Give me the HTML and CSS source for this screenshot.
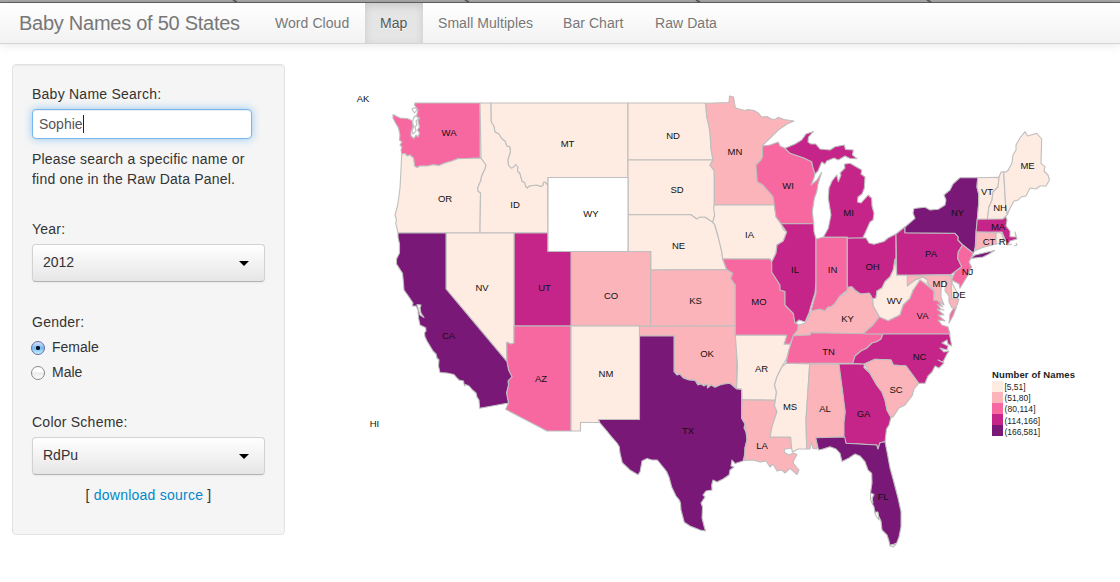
FILE: index.html
```html
<!DOCTYPE html>
<html lang="en">
<head>
<meta charset="utf-8">
<title>Baby Names of 50 States</title>
<link rel="stylesheet" href="styles.css">
</head>
<body>
<div class="chrome-edge">
  <svg width="1120" height="3" viewBox="0 0 1120 3"><path class="tab-notch" d="M233 0L237 2M465 0L469 2M696 0L700 2M927 0L931 2"/></svg>
</div>
<header class="navbar">
  <a class="brand">Baby Names of 50 States</a>
  <nav class="tabs">
    <a class="tab tab-cloud">Word Cloud</a>
    <a class="tab tab-map active">Map</a>
    <a class="tab tab-multiples">Small Multiples</a>
    <a class="tab tab-bar">Bar Chart</a>
    <a class="tab tab-raw">Raw Data</a>
  </nav>
</header>
<main class="layout">
  <form class="well">
    <label class="label">Baby Name Search:</label>
    <div class="search"><span>Sophie</span><i class="caret"></i></div>
    <p class="help">Please search a specific name or<br>find one in the Raw Data Panel.</p>
    <label class="label year">Year:</label>
    <div class="select"><span>2012</span><i class="arrow"></i></div>
    <label class="label gender">Gender:</label>
    <div class="radio"><i class="dot checked"></i><span>Female</span></div>
    <div class="radio"><i class="dot"></i><span>Male</span></div>
    <label class="label scheme">Color Scheme:</label>
    <div class="select"><span>RdPu</span><i class="arrow"></i></div>
    <p class="source">[ <a>download source</a> ]</p>
  </form>
  <svg class="map" width="760" height="518" viewBox="340 44 760 518">
    <g class="states">
      <path class="c3" d="M415 103L480 103L480 157L481 158L457.700 158.700L452 161L445 163L439 165.500L433.500 164.700L427 166L420 166L417 167.500L414.500 166L413.500 158L410 155L407 156L405 153.500L401.700 154L401 150L402 147L400 145L402 142L399.500 140L400 135L398.500 128L395 122L393 118L393 114.500L400 118L407 118.500L412 120.500L413 126.500L411 132L411 136L414 138.500L416 135L418 137L419.500 133L417.500 130L419.500 127L418 121L419.500 118L416.500 116L418 110L414.500 105Z"/>
      <path class="water" d="M412 109L415 107.500L417 110L414.500 113ZM413.500 118L416 115.500L418.500 119L416 121L417 125L415 127L416 131L413 134L412 131L414 126L412.500 123Z"/>
      <path class="c1" d="M401.700 154L405 153.500L407 156L410 155L413.500 158L414.500 166L417 167.500L420 166L427 166L433.500 164.700L439 165.500L445 163L452 161L457.700 158.700L481 158L486 165L485 169L481.500 176.500L481 180L477.700 188L478 191L480.500 193L480 233L398 233L395.700 223L396.500 220L395 215L397.700 205L400 188L401 170Z"/>
      <path class="c1" d="M480 103L491 103L491.300 121.700L494 126L495 131.700L499 134L501.700 138.500L505 141L507 146L510 146.700L510.500 152L508 160L508.500 165L511 168L513 167.500L515.700 164.500L518 167L517.500 171L520 173.500L522 181L525 183L525.500 186L527.500 188L529 186L536.700 185L541 186.500L543 185L543.500 182L545 182L547.700 185L548 233L480 233L480.500 193L478 191L477.700 188L481 180L481.500 176.500L485 169L486 165L481 158Z"/>
      <path class="c1" d="M491 103L628 103V177.500H548V185L545 182L543.500 182L543 185L541 186.500L536.700 185L529 186L527.500 188L525.500 186L525 183L522 181L520 173.500L517.500 171L518 167L515.700 164.500L513 167.500L511 168L508.500 165L508 160L510.500 152L510 146.700L507 146L505 141L501.700 138.500L499 134L495 131.700L494 126L491.300 121.700Z"/>
      <path class="c1" d="M628 103H705.700L706.700 116.700L709 124L710 131.700L711 148.300L713 160H628Z"/>
      <path class="c1" d="M628 160H713L710 165L714.300 171V205L714.700 215L712.700 222.300L705 217.300L696.700 219L691 214.700H628Z"/>
      <path class="c1" d="M628 214.700H691L696.700 219L700 217L705 217.300L712.700 222.300L714.700 224.300L717.700 235L720 243L721.700 251.700L722.700 259L726.700 269.500L650.700 270V251.500H628Z"/>
      <path class="c2" d="M571 251.500H650.700V326H571Z"/>
      <path class="c4" d="M514 233H548V251.500H571V326H514Z"/>
      <path class="c1" d="M446 233H514V343L511 344L506.700 342.300L507 361.700L446 289Z"/>
      <path class="c3" d="M514 326H571V431H547L505.700 409.300L508.500 403L506.500 393L508.500 385L508 381L512 376.700L508.500 370L507 361.700L506.700 342.300L511 344L514 343Z"/>
      <path class="c5" d="M398 233H446V289L507 361.700L508.500 370L512 376.700L508 381L508.500 385L506.500 393L508.500 403L479.700 408.300L479 400L477 397L476 393L472.500 390L469 386L465.500 384.500L464.500 386L463.500 381L459 380L457 378L454 374.500L447 373L440 372.500L438.500 366L439 360L437 358L436 354L433 351L427 341L425 336.700L424.500 333L426 331L425.700 327.700L420 325L418.500 318L418 310L416 306L412.300 306L413 303L409 297L404 290L403.500 283L402.500 273.300L396.500 264L396.500 259L399.500 253L399.500 244L398 237Z"/>
      <path class="water" d="M417 304.500L421 305L420 308L421 313L424 317.500L420 315Z"/>
      <path class="c1" d="M571 326H639.500V419.500H598.500L600 422.500H580.500V431H571Z"/>
      <path class="c2" d="M650.700 270L726.700 269.500L732.700 273.300L730.700 278.300L735.300 285V325.700L650.700 326.300Z"/>
      <path class="c2" d="M639.500 326.300L735.300 325.700V335L736.700 350V388.300L730 383.300L720 385L715 387.300L711 385L707 387L704 384L700 385L695 380L689 380L683.300 377.300L680 374.300L674 371.700V336H639.500Z"/>
      <path class="c5" d="M639.500 336H674V371.700L677 375L680 374.300L683.300 378L689 380L695 380.500L698 385L701 384L704 386L707 384L707.500 388L711 385L715 387.300L720 385L724 384L730 383.300L736.700 389L741.700 389.300V418.300L745 424L744 428L746.700 433.300L747 440L745 448L745.500 453L743 461L735 463.500L732 460L731 466L734 467L730 470L729 475L723 479L717 482L713 480L711.700 485L712 490L706 491L703 495L705 497L701 503L702.500 507L702 518L704 526L705.500 531L700 530L695 528L690 526L684.300 522.300L681 510L680.500 503L679.300 500L676 496L671.700 487L669 477L666.700 471.700L663 467L657.300 460L652 460L647 458.500L642 461L640 472L638 474.700L630 470L622.300 462.700L620 453L619.300 446.700L617 443L611.700 437L606 430L600 423L598.500 419.500H639.500Z"/>
      <path class="c2" d="M705.700 103.300L729 102.500L729.500 96L733.500 97L735.300 107.700L739 109L745 110.500L748 109.500L754 110.500L759 113.500L761.500 117L767 116.500L771.700 119.300L776 119L778.300 117.300L784 119.500L794 121L787 124L778.300 130L762.500 145.500V156.700L761 160L756 165L757.300 181.700L763 185L773 196.700L774.300 205H714.300V171L710 165L713 160L711 148.300L710 131.700L706.700 116.700Z"/>
      <path class="c1" d="M714.300 205H774.300L776 217L781 223.300L783 229L786.700 232L783.300 241L777 245L776 253.300L771.700 262L770 259H722.700L721.700 251.700L717.700 235L714.700 224.300L712.700 222.300L714.700 215L713.500 208Z"/>
      <path class="c3" d="M722.700 259H770L771.700 262V272L780 285V290L785 291.500L785 305L793.300 313.300L795 321.700L798.300 325L797.700 330L793.300 335.700L790 344.300H784L786.700 335.300H735.300V285L730.700 278.300L732.700 273.300L726.700 269.500Z"/>
      <path class="c1" d="M735.300 335.300H786.700L784 344.300H791L789 350L786.700 358.300L782 366.700L777 376.700L774.500 385L776.500 392L775 400.300L742 399.700L741.700 389.300L736.700 388.300L737.500 365Z"/>
      <path class="c2" d="M742 399.700L775 400.300L774.500 406L777 411.700L772 426.700L770 437H790.700L791.700 448.300L785 449L784 452L789 455L793 453L797 454.500L794 460L793 463L799 470L797 474.500L790 468.300L785 473L782 470L777 471L773 464L770 467L766 461L760 462L753 460L744 460.500L745 448L747 440L745 424L741.700 418.300Z"/>
      <path class="c1" d="M786 363.300L809.700 364L806 420L806.700 449L798.300 449L792.500 452L791.500 448L790.700 437H770L772 426.700L777 411.700L774.500 406L776.500 392L774.500 385L777 376.700L782 366.700Z"/>
      <path class="c2" d="M809.700 364H839L844.500 405L845.300 412L844 423L844.700 437L815.700 437.700L817.300 444L816.700 449L813 448.500L811 441.700L810 449H806.700L806 420Z"/>
      <path class="c4" d="M839 364H864.300L864 367.500L870 373.300L876.700 385L882 392L885 400L887 410L891 417.500L889 425L886.500 429L885 441.700L880 442.700L878 449L876.700 445L846 443.300L844 437V423L845.300 412L843 394Z"/>
      <path class="c5" d="M815.700 437.700L844.700 437L846 443.300L876.700 445L878 449L880 442.700L885 441.700L887.300 453.300L890 468L893.300 480L898 498L901 511.700V526.700L899 537L896.700 543L890 546L889 541L887 535L882 530L881 521L878 515L875 513L874 507L871.500 502L873 496L870.500 493L872 483L871.700 473.300L868 470L865 461.700L860 456L855 454L849 458L842 461.500L840 453.300L836 449L830 446.700L823 449L818.500 450Z"/>
      <path class="water" d="M870.500 493L874 494.500L872 498L873 503L870.500 500ZM875 512H878L879 520L876 516ZM890 545L896 544L893 547Z"/>
      <path class="c3" d="M762.500 146L770 145L778.300 142L780 146L785 148.300L790 153.300L803.300 157.700L811.700 161.700L813 168L815 173.300L814 178L811 185L817 180L821.700 172.300L818 184L816.700 192L814.300 198.300L812.300 211.700L813.700 223.700H781L776 217L774.300 205L773 196.700L763 185L757.300 181.700L756 165L761 160L762.500 156.700Z"/>
      <path class="c4" d="M785 148.300L795 144L801.700 140L806 134L813.500 131.500L808.500 137L808 142L811 144L815.700 144L820 149L830 150L835 146.700L844.300 145L845.500 149.500L853.300 150L852.500 155L857 158.700L850 158.500L845 156L838.300 160L834 158L826.700 161L825 164L821.700 162L818 171L815 174L813 168L811.700 161.700L803.300 157.700L790 153.300Z"/>
      <path class="c4" d="M823.300 237.300L828.300 228.300L831 215L828.300 198.300L829 188L832 181L836.700 175L838.300 181.700L841 175L840 173L845 168L844.300 164.300L850 163.300L861.700 170L861 174L865 177L864.300 188.300L862 194L858 197L857.500 202L861 203L868.300 195L871.700 198.300L872 206L874 213.300L873 220L870 222L865 233.300L862.700 238L847.300 238.300V237.300Z"/>
      <path class="c4" d="M781 223.700H813.700L814 231.700L816 239V282L815 293L811.700 303.300L809 313L805 322L799 320L795 323.500L793.300 313.300L785 305L785 291.500L780 290V285L771.700 272V262L776 253.300L777 245L783.300 241L786.700 232Z"/>
      <path class="c3" d="M816 239L823 237.300H847.300V290L840 296L835 303.300L831 307L828 307L825 311L820 309.300L811 311L814 300L816 293Z"/>
      <path class="c4" d="M847.300 238.300L862.700 237.700L866 238L869 243L874 244.300L884 241.500L888 238L896 234V258L894.700 260L893.300 270L890 277L885 281.700L882 288L877 291L876 298L872.700 299L870 294L866.700 294L860 294L855 290L852 287L847.300 288Z"/>
      <path class="c2" d="M793.300 335.700L797.700 330L798.300 325L805 323.300L808.300 317.300L811 311L820 309.300L825 311L828 307L831 307L835 303.300L840 296L845 294L849 286.700L852 287L855 291L861 294L869 293L872.700 299L873.300 306L879.300 316.700L873 325L863.300 333.700L810.700 332.700V335Z"/>
      <path class="c3" d="M793.300 335.700L810 335L810.700 332.700L883 334L881 339L876.700 341.700L872 343L866.700 348.300L861 351L855 356L852.700 363.300H786L789 350Z"/>
      <path class="c4" d="M896 234L905 226.700V232.700L955 233.300L958.300 237L958 240L962.700 245L958.300 251.700L957.700 258.300L961.700 266.700L955 271.700L951 274.500L896.700 275.300Z"/>
      <path class="c5" d="M905 232.700V227L915 218.300L913 213L914 208.500L925 207.300L930 210L938.300 209.300L945 205L946 200L944 195L950 190L953 184L960 177.700H977.700L977 187L978.700 194V203.300L977.300 220L976 235L975 250L973.300 253.300L962.700 245L958 240L958.300 237L955 233.300Z"/>
      <path class="c5" d="M970 258.500L975 255L994.500 250.500L989 254L983 257Z"/>
      <path class="c1" d="M977.700 177.700L999 177.300L998 187L993 192L992 200L989 207L987.300 219.300H977.300L978.700 203.300V194L977 187Z"/>
      <path class="c1" d="M999 177.300L1001 172L1003.700 171.700L1005 195L1005.700 206.700L1007.500 214.300L1003 219L987.300 219.300L989 207L992 200L993 192L998 187Z"/>
      <path class="c1" d="M1003.700 171.700L1006 172L1008.300 170L1012 163L1013 155L1016 150L1016 145L1020 138L1025 131.700L1027.700 136L1036.700 133.300L1041.700 139L1041 163.300L1045 166.700L1044 171L1048 175L1049.500 180L1046 186L1040 186L1036 189L1030 188L1026 196L1021 197L1018.300 200L1014 201L1010 208.300L1007.500 214.300L1005.700 206.700L1005 195Z"/>
      <path class="c4" d="M977.300 219.300L1003 219L1005.700 216.500L1007 220L1006 226L1010 231L1010 236.700L1016 237L1015 232L1017 239L1010 241L1008 245L1005 239L1002 232H976Z"/>
      <path class="c2" d="M976 232L996 232.700V244L983.300 247.300L974.300 251L976 245Z"/>
      <path class="c1" d="M996 232.700H1001L1004 240L1001 243L996 244Z"/>
      <path class="islands" d="M1009 245L1012 244M1014 246L1017 245L1016 243"/>
      <path class="c1" d="M951 274.500L953 276L952 283L956.700 291.700L958 299H951.700Z"/>
      <path class="c3" d="M962.700 245L973.300 253.300L971 258L969 262L971.500 267L968 275L960 288.300L959 284L951.700 280L955 271.700L961.700 266.700L957.700 258.300L958.300 251.700Z"/>
      <path class="c2" d="M907.300 275.700L951 275L951.700 299H959L956 308L952 308L949 302L949 296L945 291L946 280L942 283L941 290L941 297L944 305L938 301L933.500 300L935 291.700L928.300 285L927.700 280L923 277L915 280L907.300 286Z"/>
      <path class="c1" d="M895.500 259L896.700 275.300H907.300V286L915 280L923 277L927.700 280L926.700 285L920 280L918.300 285L913.300 290L910 298.300L903.300 305L900 315L888.300 320.700L881.700 320L879.300 316.700L873.300 306L872.700 299L876 298L877 291L882 288L885 281.700L890 277L893.300 270Z"/>
      <path class="c3" d="M863.300 333.700L873 325L879.300 317L888.300 320.700L900 315L903.300 305L910 298.300L913.300 290L920 280L926.700 285L934 291L933.500 300L938 301L943 307L937 304L941 309L944 310L937 309L944 315L938 315L945 321L938 320L942 325L948 327L950 334L883 334ZM949 323L950 314L953 309L956 308L953 316Z"/>
      <path class="c4" d="M883 334L949.500 334L951.700 346L948 344L947 340L942 343L948 346L947 350L940 348L944 352L949 351L947 354L943 362L938 360L944 363L939 368L935 366L932 372L928 376L925 383.300H918.700L906 366L893.300 365L891 360L875 359.300L864.300 364L852.700 363.300L855 356L861 351L866.700 348.300L872 343L876.700 341.700L881 339Z"/>
      <path class="c2" d="M864.300 364L875 359.300L891 360L893.300 365L906 366L918.700 383.300L914 389L912 396L905 405L899 408L893.300 416.700L891 417.500L887 410L885 400L882 392L876.700 385L870 373.300Z"/>
      <path class="blank" d="M548 177.500H628V251.500H548Z"/>
    </g>
    <g class="codes">
      <text x="363" y="102">AK</text><text x="374.500" y="427">HI</text>
      <text x="449" y="136">WA</text><text x="445" y="202">OR</text><text x="515" y="207.500">ID</text><text x="567.500" y="147">MT</text>
      <text x="673" y="139">ND</text><text x="677" y="193">SD</text><text x="678.500" y="249">NE</text><text x="591" y="217">WY</text>
      <text x="735" y="155">MN</text><text x="788" y="188.500">WI</text><text x="848.500" y="216">MI</text><text x="749.500" y="238">IA</text>
      <text x="482" y="290.500">NV</text><text x="544.500" y="290.500">UT</text><text x="611" y="298.500">CO</text><text x="695.500" y="303.500">KS</text>
      <text x="448.500" y="339">CA</text><text x="541" y="381.500">AZ</text><text x="606" y="377">NM</text><text x="707" y="357">OK</text>
      <text x="688" y="434">TX</text><text x="759" y="305">MO</text><text x="761.500" y="371.500">AR</text><text x="762" y="448.500">LA</text>
      <text x="790" y="410">MS</text><text x="825" y="412">AL</text><text x="863.500" y="416.500">GA</text><text x="883" y="499.500">FL</text>
      <text x="896" y="392.500">SC</text><text x="919.500" y="359.500">NC</text><text x="828.500" y="354.500">TN</text><text x="847.500" y="322">KY</text>
      <text x="795" y="273">IL</text><text x="832.500" y="273">IN</text><text x="872.500" y="270">OH</text><text x="931" y="257">PA</text>
      <text x="957.500" y="216">NY</text><text x="987" y="195">VT</text><text x="1000" y="211">NH</text><text x="1027.500" y="169">ME</text>
      <text x="998" y="230">MA</text><text x="989" y="244.500">CT</text><text x="1003.500" y="244.500">RI</text><text x="967.500" y="274.500">NJ</text>
      <text x="940" y="287">MD</text><text x="959" y="298">DE</text><text x="894.500" y="303.500">WV</text><text x="922.500" y="319">VA</text>
    </g>
    <g class="legend">
      <text class="legend-title" x="992" y="378" textLength="83">Number of Names</text>
      <rect class="c1" x="992" y="381" width="11" height="11"/><rect class="c2" x="992" y="392" width="11" height="11"/>
      <rect class="c3" x="992" y="403" width="11" height="11"/><rect class="c4" x="992" y="414" width="11" height="11"/>
      <rect class="c5" x="992" y="425" width="11" height="11"/>
      <text x="1004.500" y="389.500" textLength="21">[5,51]</text><text x="1004.500" y="401" textLength="26">(51,80]</text>
      <text x="1004.500" y="412" textLength="31">(80,114]</text><text x="1004.500" y="423.500" textLength="35.500">(114,166]</text>
      <text x="1004.500" y="434.500" textLength="35.500">(166,581]</text>
    </g>
  </svg>
</main>
</body>
</html>
```

FILE: styles.css
```css
* { box-sizing: border-box; }
body {
  margin: 0;
  height: 582px;
  overflow: hidden;
  background: #fff;
  color: #333;
  font: 14px/20px "Liberation Sans", Arial, sans-serif;
}
.chrome-edge { height: 3px; background: #a6a6a6; border-bottom: 1px solid #606060; }
.chrome-edge svg { display: block; }
.tab-notch { stroke: #555; stroke-width: 1.500; }
.navbar {
  display: flex;
  height: 41px;
  padding-left: 19px;
  background: linear-gradient(#fff, #f2f2f2);
  border-bottom: 1px solid #d4d4d4;
  box-shadow: 0 1px 10px rgba(0, 0, 0, .1);
}
.brand { width: 241px; font-size: 20px; line-height: 41px; color: #777; white-space: nowrap; letter-spacing: -.26px; }
.tabs { display: flex; }
.tab { padding: 0 15px; line-height: 40px; color: #777; text-shadow: 0 1px 0 #fff; white-space: nowrap; letter-spacing: .06px; }
.tab-cloud { width: 105px; }
.tab-map { width: 58px; }
.tab-multiples { width: 125px; }
.tab-bar { width: 92px; }
.active { color: #555; background: #e5e5e5; box-shadow: inset 0 3px 8px rgba(0, 0, 0, .125); }
.layout { display: flex; }
.well {
  width: 273px;
  height: 471px;
  margin: 20px 55px 0 12px;
  padding: 20px 19px;
  background: #f5f5f5;
  border: 1px solid #e3e3e3;
  border-radius: 4px;
  box-shadow: inset 0 1px 1px rgba(0, 0, 0, .05);
}
.label { display: block; height: 24px; line-height: 19px; letter-spacing: .24px; }
.search {
  display: flex;
  align-items: center;
  width: 220px;
  height: 30px;
  padding-left: 6px;
  background: #fff;
  border: 1px solid #74b7ee;
  border-radius: 4px;
  box-shadow: inset 0 1px 1px rgba(0, 0, 0, .075), 0 0 8px rgba(82, 168, 236, .6);
  color: #555;
}
.caret { width: 1px; height: 18px; background: #222; }
.help { margin: 10px 0 0; white-space: nowrap; letter-spacing: .2px; }
.year { margin-top: 31px; }
.select {
  display: flex;
  align-items: center;
  justify-content: space-between;
  width: 233px;
  height: 38px;
  padding: 0 15px 2px 10px;
  background: linear-gradient(#fff, #e6e6e6);
  border: 1px solid #d2d2d2;
  border-bottom-color: #b3b3b3;
  border-radius: 4px;
  box-shadow: 0 1px 2px rgba(0, 0, 0, .05);
}
.arrow { border: 5px solid transparent; border-top-color: #000; border-bottom: 0; margin-top: 2px; }
.gender { height: 22px; margin-top: 31px; }
.radio { display: flex; align-items: center; gap: 7px; height: 25px; margin-left: -1px; }
.radio span { margin-top: -1px; }
.dot { width: 14px; height: 14px; border: 1px solid #888; border-radius: 50%; background: linear-gradient(#fff 40%, #e9e9e9 50%, #fff); }
.checked { border-color: #6768a5; background: radial-gradient(circle at 50% 50%, #07152c 0 1.800px, transparent 2.500px), linear-gradient(#d7e5fa, #78b8ef 50%, #c2f5ff); }
.scheme { margin-top: 28px; }
.source { margin: 10px 0 0; text-align: center; letter-spacing: .24px; }
.source a { color: #0088cc; }
.map { display: block; flex: none; }
.states path { stroke: #bebebe; stroke-width: 1.100; stroke-linejoin: round; }
.c1 { fill: #feebe2; }
.c2 { fill: #fbb4b9; }
.c3 { fill: #f768a1; }
.c4 { fill: #c52589; }
.c5 { fill: #7a1878; }
.water, .blank { fill: #fff; }
.states .islands { fill: none; }
.codes text { font-size: 9.500px; text-anchor: middle; fill: #111; }
.legend text { font-size: 8.500px; fill: #222; }
.legend .legend-title { font-size: 9.500px; font-weight: bold; }
```
